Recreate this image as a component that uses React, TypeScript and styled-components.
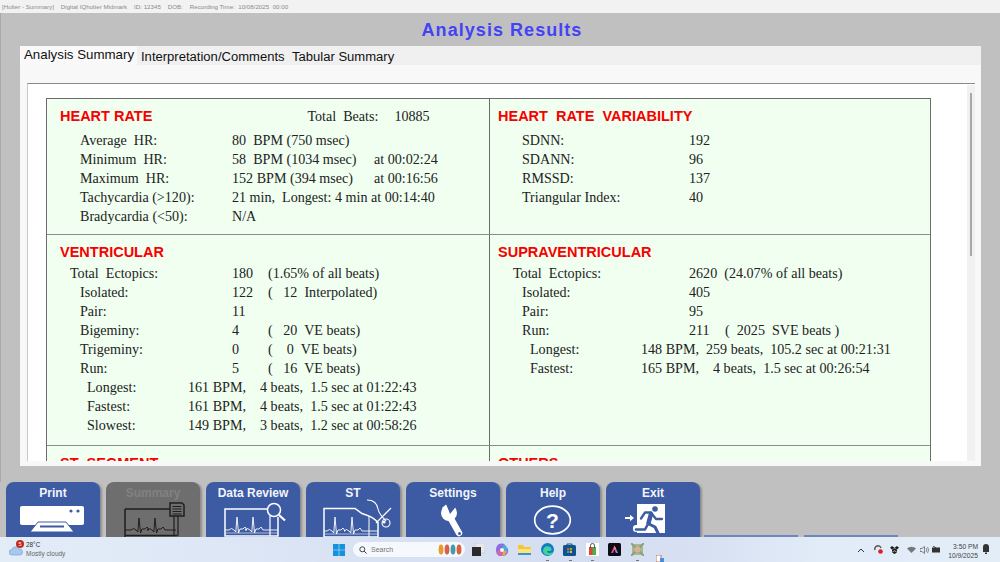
import React from "react";
import styled, { createGlobalStyle } from "styled-components";

const Global = createGlobalStyle`
  html, body { margin: 0; padding: 0; width: 1000px; height: 562px; overflow: hidden; background: #c0c0c0; }
  #root { width: 1000px; height: 562px; }
`;

const BLUE = "#3c5ba2";
const GREY = "#6e6e6e";
const DARK = "#1f1f1f";

const Page = styled.div`
  width: 1000px; height: 562px; display: flex; flex-direction: column; overflow: hidden;
  font-family: "Liberation Sans", Arial, sans-serif;
`;
const TitleBar = styled.div`
  height: 13px; flex: none; background: #f2f2f2; color: #8a8a8a; font-size: 6.2px; line-height: 13px;
  padding-left: 2px; white-space: pre;
`;
const Main = styled.div`
  flex: 1; min-height: 0; background: #c0c0c0; display: flex; flex-direction: column; border-left: 1px solid #aaa;
`;
const Title = styled.h1`
  margin: 0; height: 33px; flex: none; text-align: center; color: #4343f5; font-size: 18px; font-weight: 700;
  line-height: 34px; letter-spacing: 1.05px; padding-left: 3px;
`;
const Panel = styled.div`
  margin-left: 19px; width: 961px; height: 420px; flex: none; background: #f8f8f8; display: flex; flex-direction: column;
`;
const Tabs = styled.div`
  height: 19px; flex: none; background: #f0f0f0; display: flex; align-items: flex-end; color: #111;
`;
const Tab = styled.div<{ $active?: boolean; $w: number }>`
  width: ${p => p.$w}px; height: ${p => (p.$active ? 19 : 18)}px; line-height: ${p => (p.$active ? 17 : 20)}px;
  font-size: ${p => (p.$active ? 13.3 : 13.05)}px;
  padding-left: 4px; box-sizing: border-box; white-space: nowrap;
  background: ${p => (p.$active ? "#f9f9f9" : "#f0f0f0")};
`;
const Sheet = styled.div`
  margin: 18px 6px 5px 7px; flex: 1; min-height: 0; background: #fff; border-top: 1px solid #8a8a8a;
  border-left: 1px solid #c9c9c9; display: flex; overflow: hidden; position: relative;
`;
const Report = styled.div`
  margin: 14px 0 0 18px; width: 883px; flex: none; display: grid; grid-template-columns: 443px 440px;
  grid-template-rows: 136px 211px 40px; background: #f0fff0; border: 1px solid #6c6c6c; border-bottom: none; align-self: flex-start;
  font-family: "Liberation Serif", "Times New Roman", serif; color: #222; font-size: 14.1px;
`;
const Cell = styled.div<{ $right?: boolean; $bottom?: boolean }>`
  box-sizing: border-box; border-right: ${p => (p.$right ? "none" : "1px solid #6c6c6c")};
  border-bottom: ${p => (p.$bottom ? "1px solid #8c8c8c" : "none")};
  padding-left: ${p => (p.$right ? 8 : 13)}px;
`;
const HeadRow = styled.div<{ $gap: number }>`
  display: flex; height: 19px; line-height: 19px; margin-top: 8px; white-space: pre; margin-bottom: ${p => p.$gap}px;
`;
const Heading = styled.h2`
  margin: 0; font-family: "Liberation Sans", Arial, sans-serif; color: #f70000; font-weight: 700; font-size: 14.5px;
  line-height: 19px; white-space: pre;
`;
const Side = styled.span<{ $left: number }>`
  margin-left: ${p => p.$left}px;
`;
const Row = styled.div<{ $x: number; $v: number }>`
  display: grid; grid-template-columns: ${p => p.$v - p.$x}px 1fr; padding-left: ${p => p.$x}px; height: 19px; line-height: 19px; white-space: pre;
`;
const Slot = styled.span<{ $w: number }>`
  display: inline-block; width: ${p => p.$w}px;
`;
const Track = styled.div`
  position: absolute; right: 0; top: 1px; bottom: 0; width: 8px; background: #f1f1f1;
`;
const Thumb = styled.div`
  position: absolute; left: 3px; top: 8px; width: 2px; height: 163px; background: #a8a8a8;
`;

const Toolbar = styled.div`
  height: 55px; flex: none; background: #c0c0c0; display: flex; gap: 6px; padding-left: 6px; align-items: flex-end;
  overflow: hidden; margin-top: -1px;
`;
const ToolButton = styled.div<{ $off?: boolean }>`
  width: 94px; height: 55px; flex: none; box-sizing: border-box; border-radius: 8px 8px 0 0;
  background: ${p => (p.$off ? GREY : BLUE)};
  color: ${p => (p.$off ? "#828282" : "#f2f5fb")}; font-size: 12px; font-weight: 700; text-align: center;
  line-height: 12px; padding-top: 5px; box-shadow: 2px 1px 2px #8e8e8e; overflow: hidden;
`;
const HiddenButton = styled.div<{ $shift?: number }>`
  width: 94px; height: 2px; flex: none; background: #6d86bb; margin-left: ${p => p.$shift ?? 0}px;
`;
const Icon = styled.svg`
  display: block; width: 94px; height: 38px;
`;

const Taskbar = styled.div`
  height: 25px; flex: none; display: flex; align-items: center; position: relative;
  background: linear-gradient(90deg, #e3edf8 0%, #dfe8f6 18%, #d8e2f3 36%, #d5def1 60%, #d8e2f3 72%, #e2ecf8 82%, #e3edf8 100%);
  color: #333;
`;
const Weather = styled.div`
  width: 333px; flex: none; box-sizing: border-box; padding-left: 9px; display: flex; align-items: center; gap: 3px; position: relative;
`;
const WeatherText = styled.div`
  font-size: 6.4px; line-height: 8.4px; color: #333;
  span { display: block; color: #666; font-size: 6.5px; }
`;
const Badge = styled.div`
  position: absolute; left: 16px; top: -1px; width: 8px; height: 8px; border-radius: 50%; background: #c4281c; color: #fff;
  font-size: 5.5px; line-height: 8px; text-align: center;
`;
const Search = styled.div`
  width: 112px; height: 15px; flex: none; margin-left: 8px; border-radius: 8px; background: #f5f8fd; display: flex; align-items: center;
  font-size: 7px; color: #777; padding-left: 6px; box-sizing: border-box; gap: 4px; position: relative;
`;
const Apps = styled.div`
  display: flex; align-items: center; margin-left: 7px; gap: 9.5px;
`;
const AppSlot = styled.div<{ $dot?: boolean }>`
  position: relative; display: flex;
  &::after {
    content: ""; display: ${p => (p.$dot ? "block" : "none")}; position: absolute; left: 50%; bottom: -5px; width: 3px; height: 1px;
    margin-left: -1px; background: #777;
  }
`;
const Tray = styled.div`
  position: absolute; left: 857px; top: 0; height: 25px; display: flex; align-items: center;
`;
const Clock = styled.div`
  position: absolute; left: 946px; top: 5px; font-size: 6.7px; line-height: 9px; color: #444; text-align: right; width: 32px;
`;
const Bell = styled.svg`
  position: absolute; left: 982px; top: 7px;
`;
const Stray = styled.svg`
  position: absolute; left: 656px; top: 18px;
`;

const ecg = (x0: number, x1: number, y: number, top: number, peaks: number[]) => {
  let d = `M${x0} ${y}`;
  peaks.forEach(p => {
    d += `L${p - 8} ${y}L${p - 5.500} ${y - 1.500}L${p - 3} ${y}L${p - 1.200} ${y + 2}L${p} ${top}L${p + 1.500} ${y + 3}L${p + 3} ${y - 1}L${p + 6} ${y - 1}L${p + 8} ${y - 3}L${p + 10} ${y}`;
  });
  return d + `L${x1} ${y}`;
};

const PrintIcon = () => (
  <Icon viewBox="0 0 94 38">
    <rect x="14" y="7" width="64" height="19" rx="2" fill="#fff" />
    <circle cx="65" cy="12" r="1.600" fill={BLUE} /><circle cx="72" cy="12" r="1.600" fill={BLUE} />
    <path d="M32 23h28l8 10H24z" fill="#fff" stroke={BLUE} strokeWidth="1" />
    <rect x="34" y="26.500" width="24" height="2" fill={BLUE} />
  </Icon>
);
const SummaryIcon = () => (
  <Icon viewBox="0 0 94 38">
    <path d="M19 10h45M19 10v28M19 36.500h52" fill="none" stroke={DARK} strokeWidth="1.500" />
    <path d={ecg(19, 70, 31, 19, [33, 49])} fill="none" stroke={DARK} strokeWidth="1" />
    <path d="M64 4h12l2 2v11H64z" fill={GREY} stroke={DARK} strokeWidth="1.500" />
    <path d="M66.500 7.500h9M66.500 10h9M66.500 12.500h9M66.500 15h9" stroke={DARK} strokeWidth="1" />
    <path d="M68 17v20M72 17v20" stroke={DARK} strokeWidth="1.200" />
  </Icon>
);
const ReviewIcon = () => (
  <Icon viewBox="0 0 94 38">
    <path d="M62 10H19v27h53V18" fill="none" stroke="#fff" strokeWidth="1.500" />
    <path d={ecg(19, 72, 31, 18, [31, 47])} fill="none" stroke="#fff" strokeWidth=".9" />
    <path d="M64 17v20" stroke="#fff" strokeWidth="1.200" />
    <path d="M19 34h53" stroke="#fff" strokeWidth=".6" />
    <circle cx="68" cy="11" r="6.500" fill={BLUE} stroke="#fff" strokeWidth="1.500" />
    <path d="M73 16l6 5.500" stroke="#fff" strokeWidth="2.200" />
  </Icon>
);
const StIcon = () => (
  <Icon viewBox="0 0 94 38">
    <path d="M18 9.500h31l7 5c5 2 10 2 16 9V38H18z" fill="none" stroke="#fff" strokeWidth="1.500" />
    <path d={ecg(18, 72, 32, 18, [29, 46])} fill="none" stroke="#fff" strokeWidth=".9" />
    <path d="M63 17v21" stroke="#fff" strokeWidth="1" />
    <path d="M18 35h54" stroke="#fff" strokeWidth=".6" />
    <path d="M61 1c7 0 10 3 11 9 1 5 4 8 8 12" fill="none" stroke="#fff" strokeWidth="1.100" />
    <path d="M85 9 70 24" stroke="#fff" strokeWidth="1.300" />
    <circle cx="80" cy="24" r="4" fill="none" stroke="#fff" strokeWidth="1.100" />
    <circle cx="78" cy="23" r="1.500" fill="#fff" />
  </Icon>
);
const WrenchIcon = () => (
  <Icon viewBox="0 0 94 38">
    <path d="M44 18 53 34" stroke="#fff" strokeWidth="6.500" strokeLinecap="round" />
    <circle cx="43" cy="14" r="8" fill="#fff" />
    <path d="M44 15 39 3 53 4z" fill={BLUE} />
    <path d="M40 5.500 43.500 14 L36 9z" fill="#fff" />
    <circle cx="53.500" cy="34.500" r="1.500" fill={BLUE} />
  </Icon>
);
const HelpGlyph = styled.text`
  font-family: "Liberation Sans", Arial, sans-serif; font-size: 21px; font-weight: 700; fill: #fff;
`;
const HelpIcon = () => (
  <Icon viewBox="0 0 94 38">
    <ellipse cx="46.500" cy="21" rx="17.800" ry="13.800" fill="none" stroke="#fff" strokeWidth="1.700" />
    <HelpGlyph x="46.500" y="28.500" textAnchor="middle">?</HelpGlyph>
  </Icon>
);
const ExitIcon = () => (
  <Icon viewBox="0 0 94 38">
    <path d="M19 18h5v-2.200l4 3.200-4 3.200V20h-5z" fill="#fff" />
    <rect x="31" y="5" width="28" height="29" fill="#fff" />
    <rect x="27" y="26" width="8" height="7" rx="3" fill="#fff" />
    <circle cx="49" cy="10" r="2.800" fill={BLUE} />
    <g fill="none" stroke={BLUE} strokeLinejoin="round" strokeLinecap="round">
      <path d="M45 15l-2.500 9" strokeWidth="4.500" />
      <path d="M45 13.500h-6l-4 6" strokeWidth="2.300" />
      <path d="M46 15l4 5h6" strokeWidth="2.300" />
      <path d="M43 25l6 3 3 6" strokeWidth="3" />
      <path d="M42 25l-3 5.500h-9" strokeWidth="2.600" />
    </g>
  </Icon>
);

const WinLogo = () => (
  <svg width="12" height="12" viewBox="0 0 12 12">
    <path d="M0 0h5.700v5.700H0zM6.300 0H12v5.700H6.300zM0 6.300h5.700V12H0zM6.300 6.300H12V12H6.300z" fill="#1692dc" />
  </svg>
);
const Cloud = () => (
  <svg width="14" height="12" viewBox="0 0 14 12">
    <path d="M3 11a2.700 2.700 0 0 1-.3-5.400A4 4 0 0 1 10 5a3 3 0 0 1 1 6z" fill="#a9c8ec" stroke="#6c9bd2" strokeWidth=".6" />
  </svg>
);
const Glass = () => (
  <svg width="8" height="8" viewBox="0 0 8 8"><circle cx="3.300" cy="3.300" r="2.500" fill="none" stroke="#333" strokeWidth=".9" /><path d="M5.200 5.200 7.500 7.500" stroke="#333" strokeWidth="1" /></svg>
);
const CrowdSvg = styled.svg`
  position: absolute; right: 2px; top: 2px;
`;
const Crowd = () => (
  <CrowdSvg width="25" height="11" viewBox="0 0 25 11">
    {[["#e79b2a", 3], ["#d6604d", 9], ["#3f9da8", 15], ["#d9603b", 21]].map(([c, x]) => (
      <ellipse key={String(x)} cx={Number(x)} cy="5.500" rx="2.400" ry="5" fill={String(c)} />
    ))}
  </CrowdSvg>
);
const appIcons = [
  <svg key="a" width="13" height="13" viewBox="0 0 13 13"><rect x="3" y="0" width="10" height="10" fill="#e8e8e8" stroke="#bbb" strokeWidth=".5" /><rect x="0" y="4" width="9" height="9" fill="#2a2a2a" /></svg>,
  <svg key="b" width="14" height="14" viewBox="0 0 14 14"><path d="M2 3c2-3 6-3 8-1l3 4c1 4-2 7-5 7H5C1 13 0 6 2 3z" fill="#8a6fe0" /><path d="M8 2c3 0 5 3 4 6H8z" fill="#3fb4d8" /><path d="M2 8h5l-1 5C3 13 2 10 2 8z" fill="#e8609a" /><path d="M8 8h4c-1 3-3 5-5 5z" fill="#f2a63b" /><circle cx="7" cy="7" r="2" fill="#f5f6fb" /></svg>,
  <svg key="c" width="13" height="12" viewBox="0 0 13 12"><path d="M0 1h5l1 2h7v8H0z" fill="#f6c72f" /><rect y="5" width="13" height="5" fill="#fde47a" /><rect x="0" y="9" width="13" height="2" fill="#3795d6" /></svg>,
  <svg key="d" width="13" height="13" viewBox="0 0 13 13"><circle cx="6.500" cy="6.500" r="6.500" fill="#0f7cc4" /><path d="M2 8c0-4 4-6 7-4 2 1 2 4 0 4H6c0 2 3 3 6 1-1 3-4 4-6 3-2 0-4-2-4-4z" fill="#44d1a0" /></svg>,
  <svg key="e" width="13" height="13" viewBox="0 0 13 13"><rect y="2" width="13" height="11" rx="1.500" fill="#12528a" /><path d="M4 3V1h5v2" fill="none" stroke="#12528a" /><rect x="4" y="5" width="2.200" height="2.200" fill="#e8502f" /><rect x="6.800" y="5" width="2.200" height="2.200" fill="#7cb93a" /><rect x="4" y="7.800" width="2.200" height="2.200" fill="#2e9be0" /><rect x="6.800" y="7.800" width="2.200" height="2.200" fill="#f3b72b" /></svg>,
  <svg key="f" width="13" height="13" viewBox="0 0 13 13"><rect width="13" height="13" fill="#fff" /><path d="M3 4h7v8H3z" fill="#e2452f" /><path d="M6.500 4h3.500v8H6.500z" fill="#4eae4a" /><path d="M4.500 5V2.500a2 2 0 0 1 4 0V5" fill="none" stroke="#555" /></svg>,
  <svg key="g" width="13" height="13" viewBox="0 0 13 13"><rect width="13" height="13" rx="1.500" fill="#0c0c18" /><path d="M6.500 2.500 10 10H8L6.500 6.500 5 10H3z" fill="#e84a8f" /><path d="M6.500 2.500 8 6 6.500 6.500z" fill="#f8c43a" /><path d="M8 10l-1-3 1.300-.5L10 10z" fill="#5f8ff5" /></svg>,
  <svg key="h" width="13" height="13" viewBox="0 0 13 13"><rect x="1" y="1" width="11" height="11" fill="#a8b4a0" /><path d="M0 0l13 13M13 0 0 13" stroke="#8aa36f" strokeWidth="2" /><rect x="4" y="4" width="5" height="5" fill="#d9b28a" /></svg>
];
const dotted = [false, false, false, true, true, true, false, true];

const TrayIcon = styled.svg<{ $gap: number }>`
  margin-left: ${p => p.$gap}px; flex: none;
`;
const TrayIcons = () => (
  <>
    <TrayIcon $gap={0} width="8" height="6" viewBox="0 0 8 6"><path d="M1 5l3-3 3 3" fill="none" stroke="#333" strokeWidth="1" /></TrayIcon>
    <TrayIcon $gap={9} width="9" height="9" viewBox="0 0 9 9"><path d="M1 5a3 3 0 0 1 6-2" fill="none" stroke="#555" strokeWidth="1.500" /><circle cx="6.500" cy="6.500" r="2.300" fill="#d81e2c" /></TrayIcon>
    <TrayIcon $gap={7} width="9" height="8" viewBox="0 0 9 8"><path d="M2 0l2.500 1.700L2 3.400 0 1.700zM7 0l2 1.700-2 1.700-2.500-1.700zM2 3.800l2.500-1.600 0 2L2 6zM7 3.800 4.500 2.200v2L7 6zM4.500 5 2 6.500 4.500 8 7 6.500z" fill="#1d1d1d" /></TrayIcon>
    <TrayIcon $gap={8} width="9" height="7" viewBox="0 0 9 7"><path d="M0 2.500a6.500 6.500 0 0 1 9 0L4.500 7z" fill="#777" /></TrayIcon>
    <TrayIcon $gap={4} width="9" height="8" viewBox="0 0 9 8"><path d="M0 2.500h2L4.500 .5v7L2 5.500H0z" fill="none" stroke="#555" strokeWidth=".7" /><path d="M6 2a3 3 0 0 1 0 4M7.500 1a5 5 0 0 1 0 6" fill="none" stroke="#666" strokeWidth=".7" /></TrayIcon>
    <TrayIcon $gap={3} width="9" height="7" viewBox="0 0 9 7"><rect y="1.500" width="8" height="5" fill="#333" /><path d="M1 0l3 2" stroke="#333" /></TrayIcon>
  </>
);

type R = { x: number; v: number; l: string; c: React.ReactNode };
const hr: R[] = [
  { x: 20, v: 172, l: "Average  HR:", c: "80  BPM (750 msec)" },
  { x: 20, v: 172, l: "Minimum  HR:", c: <><Slot $w={142}>58  BPM (1034 msec)</Slot>at 00:02:24</> },
  { x: 20, v: 172, l: "Maximum  HR:", c: <><Slot $w={142}>152 BPM (394 msec)</Slot>at 00:16:56</> },
  { x: 20, v: 172, l: "Tachycardia (>120):", c: "21 min,  Longest: 4 min at 00:14:40" },
  { x: 20, v: 172, l: "Bradycardia (<50):", c: "N/A" }
];
const hrv: R[] = [
  { x: 24, v: 191, l: "SDNN:", c: "192" },
  { x: 24, v: 191, l: "SDANN:", c: "96" },
  { x: 24, v: 191, l: "RMSSD:", c: "137" },
  { x: 24, v: 191, l: "Triangular Index:", c: "40" }
];
const slot = (a: string, b: string) => <><Slot $w={36}>{a}</Slot>{b}</>;
const ve: R[] = [
  { x: 10, v: 172, l: "Total  Ectopics:", c: slot("180", "(1.65% of all beats)") },
  { x: 20, v: 172, l: "Isolated:", c: slot("122", "(   12  Interpolated)") },
  { x: 20, v: 172, l: "Pair:", c: "11" },
  { x: 20, v: 172, l: "Bigeminy:", c: slot("4", "(   20  VE beats)") },
  { x: 20, v: 172, l: "Trigeminy:", c: slot("0", "(    0  VE beats)") },
  { x: 20, v: 172, l: "Run:", c: slot("5", "(   16  VE beats)") },
  { x: 27, v: 128, l: "Longest:", c: "161 BPM,    4 beats,  1.5 sec at 01:22:43" },
  { x: 27, v: 128, l: "Fastest:", c: "161 BPM,    4 beats,  1.5 sec at 01:22:43" },
  { x: 27, v: 128, l: "Slowest:", c: "149 BPM,    3 beats,  1.2 sec at 00:58:26" }
];
const sv: R[] = [
  { x: 15, v: 191, l: "Total  Ectopics:", c: "2620  (24.07% of all beats)" },
  { x: 24, v: 191, l: "Isolated:", c: "405" },
  { x: 24, v: 191, l: "Pair:", c: "95" },
  { x: 24, v: 191, l: "Run:", c: slot("211", "(  2025  SVE beats )") },
  { x: 32, v: 143, l: "Longest:", c: "148 BPM,  259 beats,  105.2 sec at 00:21:31" },
  { x: 32, v: 143, l: "Fastest:", c: "165 BPM,    4 beats,  1.5 sec at 00:26:54" }
];
const Rows = ({ rows }: { rows: R[] }) => (
  <>{rows.map(r => <Row key={r.l} $x={r.x} $v={r.v}><span>{r.l}</span><span>{r.c}</span></Row>)}</>
);

export default function App() {
  return (
    <Page>
      <Global />
      <TitleBar>{"[Holter - Summary]    Digital IQholter Midmark    ID: 12345    DOB:    Recording Time:  10/08/2025  00:00"}</TitleBar>
      <Main>
        <Title>Analysis Results</Title>
        <Panel>
          <Tabs>
            <Tab $active $w={117}>Analysis Summary</Tab>
            <Tab $w={151}>Interpretation/Comments</Tab>
            <Tab $w={110}>Tabular Summary</Tab>
          </Tabs>
          <Sheet>
            <Report>
              <Cell $bottom>
                <HeadRow $gap={5}><Heading>HEART RATE</Heading><Side $left={155}><Slot $w={87}>{"Total  Beats:"}</Slot>10885</Side></HeadRow>
                <Rows rows={hr} />
              </Cell>
              <Cell $right $bottom>
                <HeadRow $gap={5}><Heading>{"HEART  RATE  VARIABILITY"}</Heading></HeadRow>
                <Rows rows={hrv} />
              </Cell>
              <Cell $bottom>
                <HeadRow $gap={2}><Heading>VENTRICULAR</Heading></HeadRow>
                <Rows rows={ve} />
              </Cell>
              <Cell $right $bottom>
                <HeadRow $gap={2}><Heading>SUPRAVENTRICULAR</Heading></HeadRow>
                <Rows rows={sv} />
              </Cell>
              <Cell><HeadRow $gap={2}><Heading>ST  SEGMENT</Heading></HeadRow></Cell>
              <Cell $right><HeadRow $gap={2}><Heading>OTHERS</Heading></HeadRow></Cell>
            </Report>
            <Track><Thumb /></Track>
          </Sheet>
        </Panel>
      </Main>
      <Toolbar>
        <ToolButton>Print<PrintIcon /></ToolButton>
        <ToolButton $off>Summary<SummaryIcon /></ToolButton>
        <ToolButton>Data Review<ReviewIcon /></ToolButton>
        <ToolButton>ST<StIcon /></ToolButton>
        <ToolButton>Settings<WrenchIcon /></ToolButton>
        <ToolButton>Help<HelpIcon /></ToolButton>
        <ToolButton>Exit<ExitIcon /></ToolButton>
        <HiddenButton $shift={-2} /><HiddenButton />
      </Toolbar>
      <Taskbar>
        <Weather>
          <Cloud /><Badge>5</Badge>
          <WeatherText>28°C<span>Mostly cloudy</span></WeatherText>
        </Weather>
        <WinLogo />
        <Search><Glass />Search<Crowd /></Search>
        <Apps>{appIcons.map((icon, k) => <AppSlot key={k} $dot={dotted[k]}>{icon}</AppSlot>)}</Apps>
        <Stray width="8" height="7" viewBox="0 0 8 7"><rect width="5" height="7" fill="#fff" stroke="#b5533c" strokeWidth=".8" /><rect x="4" y="3" width="4" height="4" fill="#4a90d9" /></Stray>
        <Tray><TrayIcons /></Tray>
        <Clock>3:50 PM<br />10/9/2025</Clock>
        <Bell width="8" height="10" viewBox="0 0 8 10"><path d="M1 8V3a3 3 0 0 1 6 0v5zM3 8.500h2V10H3z" fill="#333" /></Bell>
      </Taskbar>
    </Page>
  );
}
